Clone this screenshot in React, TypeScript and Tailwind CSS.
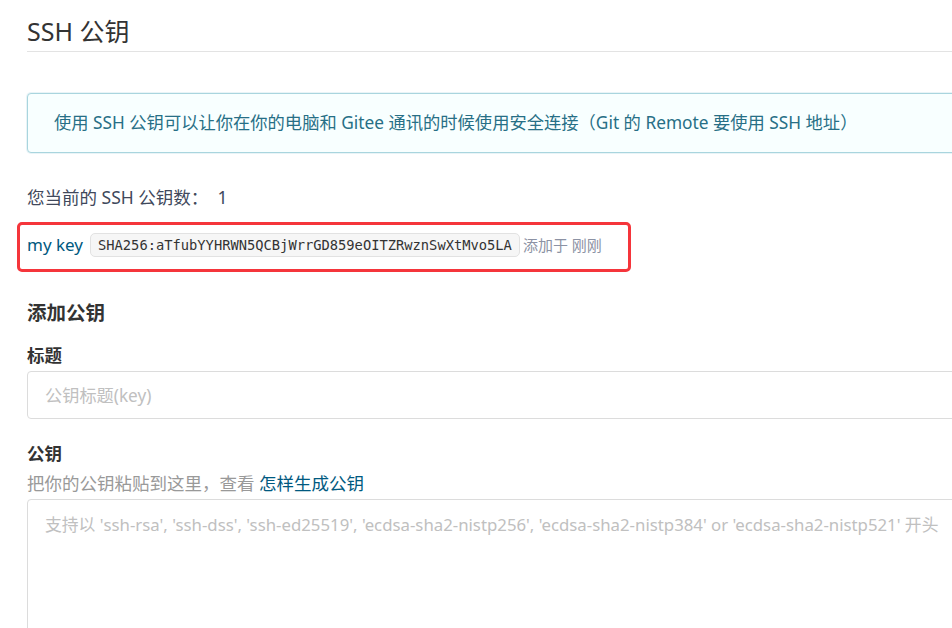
import React from 'react';

const fontStack = { fontFamily: '"Noto Sans", "Noto Sans CJK SC", sans-serif' };

const SshKeys = () => {
  return (
    <div className="w-[952px] h-[628px] overflow-hidden bg-white" style={fontStack}>
      <div className="w-[1100px] pl-[27px] text-[#333]">
        {/* Title */}
        <div className="mt-[15px] pb-[4px] border-b border-[#e3e3e3]">
          <h1 className="text-[25px] leading-[32px] font-normal text-[#333]">SSH 公钥</h1>
        </div>

        {/* Info message */}
        <div className="mt-[41px] h-[60px] rounded-[4px] border border-[#a9d5de] bg-[#f8ffff] px-[26px] flex items-center shadow-[0_0_0_1px_rgba(169,213,222,0.25)]">
          <span className="text-[17.3px] leading-[22px] text-[#276f86]">
            使用 SSH 公钥可以让你在你的电脑和 Gitee 通讯的时候使用安全连接（Git 的 Remote 要使用 SSH 地址）
          </span>
        </div>

        {/* Count */}
        <div className="mt-[32px] text-[17.5px] leading-[24px] text-[#40485b]">您当前的 SSH 公钥数：&nbsp; 1</div>

        {/* Key list (annotated) */}
        <div className="mt-[13px] -ml-[10px] w-[614px] h-[50px] border-[3px] border-[#f5353b] rounded-[5px] px-[7px] pb-[4px] flex items-center">
          <span className="text-[17px] leading-[22px] text-[#005980]">my key</span>
          <span
            className="ml-[7px] h-[24px] px-[7px] flex items-center rounded-[5px] border border-[#e2e2e2] bg-[#f6f6f6] text-[13.75px] text-[#333]"
            style={{ fontFamily: '"DejaVu Sans Mono", "Liberation Mono", monospace' }}
          >
            SHA256:aTfubYYHRWN5QCBjWrrGD859eOITZRwznSwXtMvo5LA
          </span>
          <span className="ml-[3px] text-[15px] leading-[20px] text-[#8c92a4]">添加于 刚刚</span>
        </div>

        {/* Add key form */}
        <h3 className="mt-[29px] text-[19.5px] leading-[24px] font-bold text-[#333]">添加公钥</h3>

        <label className="block mt-[19px] text-[17.5px] leading-[22px] font-bold text-[#333]">标题</label>
        <input
          className="mt-[5px] w-full h-[48px] rounded-[4px] border border-[#dcdcdc] px-[17px] text-[17.2px] outline-none placeholder:text-[#c0c0c0]"
          placeholder="公钥标题(key)"
          style={fontStack}
        />

        <label className="block mt-[23px] text-[17.5px] leading-[22px] font-bold text-[#333]">公钥</label>
        <div className="mt-[8px] text-[17.5px] leading-[22px] text-[#999]">
          把你的公钥粘贴到这里，查看 <a className="text-[#005980]">怎样生成公钥</a>
        </div>
        <textarea
          className="mt-[5px] block w-full h-[200px] rounded-[4px] border border-[#dcdcdc] px-[17px] pt-[14px] text-[16.8px] leading-[22px] outline-none resize-none placeholder:text-[#c0c0c0]"
          placeholder="支持以 'ssh-rsa', 'ssh-dss', 'ssh-ed25519', 'ecdsa-sha2-nistp256', 'ecdsa-sha2-nistp384' or 'ecdsa-sha2-nistp521' 开头"
          style={fontStack}
        />
      </div>
    </div>
  );
};

export default SshKeys;
